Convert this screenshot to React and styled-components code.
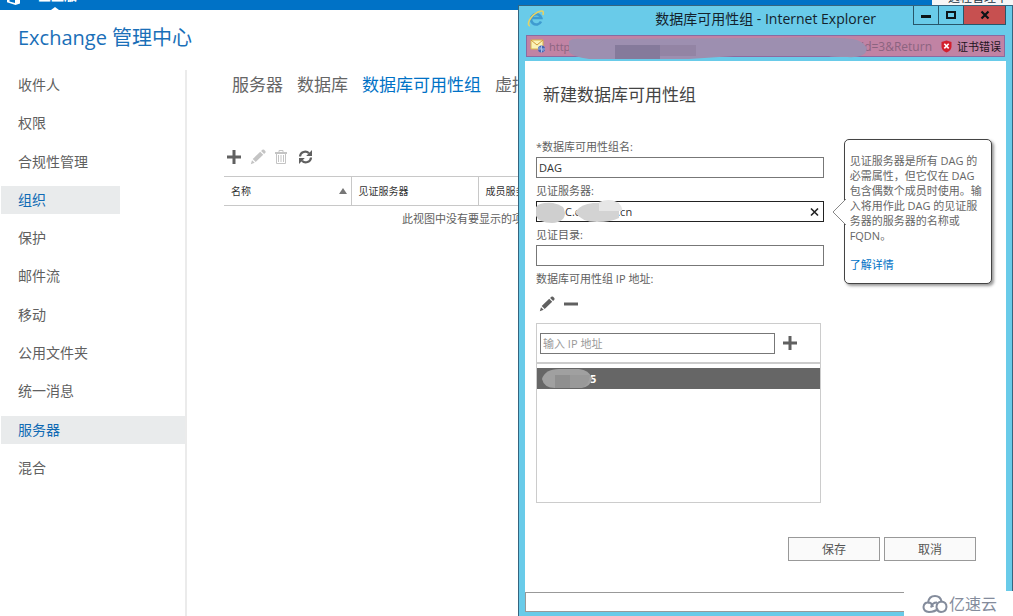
import React from 'react';
import styled, { createGlobalStyle } from 'styled-components';

const Global = createGlobalStyle`
  * { box-sizing: border-box; }
  body {
    margin: 0;
    background: #fff;
    color: #606060;
    font-family: 'Open Sans', 'Noto Sans CJK SC', sans-serif;
    font-size: 11px;
    line-height: 15px;
  }
  button, input { font: inherit; color: inherit; }
  h1, h2, ul { margin: 0; padding: 0; font-weight: 400; list-style: none; }
  a { color: inherit; text-decoration: none; }
`;

const Page = styled.div`
  position: relative;
  display: flex;
  flex-direction: column;
  min-height: 100vh;
  overflow: hidden;
`;

const SuiteBar = styled.header`
  display: flex;
  justify-content: space-between;
  align-items: flex-end;
  height: 10px;
  background: #0072c6;
  color: #fff;
  overflow: hidden;
`;

const SuiteBrand = styled.div`
  position: relative;
  display: flex;
  align-items: flex-end;
  gap: 16px;
  height: 10px;
  padding-left: 6px;
`;

const SuiteName = styled.span`
  font-size: 13px;
  font-weight: 700;
  line-height: 18px;
  padding-bottom: 6px;
`;

const SuiteMarker = styled.i`
  position: absolute;
  left: 51px;
  bottom: 0;
  border: 4px solid transparent;
  border-top: 0;
  border-bottom: 3px solid #fff;
`;

const UserPanel = styled.div`
  align-self: flex-start;
  display: flex;
  align-items: flex-end;
  width: 81px;
  height: 5px;
  padding-left: 16px;
  background: #f6f6f6;
  color: #234;
  font-size: 12px;
  line-height: 14px;
  white-space: nowrap;
  overflow: hidden;
`;

const AppTitle = styled.h1`
  padding: 14px 18px 18px;
  color: #1a6fb8;
  font-size: 20px;
  line-height: 28px;
`;

const Body = styled.div`
  flex: 1;
  display: grid;
  grid-template-columns: 187px minmax(0, 1fr);
`;

const Side = styled.nav`
  padding: 1px 0 0 1px;
  border-right: 2px solid #ebebeb;
`;

const SideList = styled.ul`
  display: flex;
  flex-direction: column;
  justify-content: space-between;
  height: 411px;
`;

const SideLink = styled.a`
  display: block;
  width: ${(p) => (p.$short ? '119px' : 'auto')};
  padding: 0 17px;
  font-size: 14px;
  line-height: 28px;
  color: ${(p) => (p.$active ? '#0f6ab4' : '#606060')};
  background: ${(p) => (p.$active ? '#e9ebec' : 'transparent')};
`;

const Main = styled.main`
  padding: 0 0 0 37px;
  min-width: 0;
`;

const Tabs = styled.nav`
  display: flex;
  gap: 14px;
  padding: 3px 8px 0;
  font-size: 17px;
  line-height: 24px;
  white-space: nowrap;
`;

const Tab = styled.a`
  color: ${(p) => (p.$active ? '#0072c6' : '#666')};
`;

const Toolbar = styled.div`
  display: flex;
  align-items: center;
  gap: 8px;
  padding: ${(p) => p.$pad};
`;

const IconButton = styled.button`
  display: block;
  width: 16px;
  height: 16px;
  padding: 0;
  border: 0;
  background: none;
  color: ${(p) => (p.disabled ? '#c4c4c4' : '#606060')};
  svg { display: block; }
`;

const Grid = styled.table`
  width: 100%;
  table-layout: fixed;
  border-collapse: collapse;
  border-top: 1px solid #c8c8c8;
`;

const HeadCell = styled.th`
  width: ${(p) => p.$width || 'auto'};
  height: 29px;
  padding: 0 7px;
  border-bottom: 1px solid #c8c8c8;
  border-right: 1px solid #c8c8c8;
  color: #333;
  font-size: 10px;
  font-weight: 400;
  text-align: left;
`;

const HeadLabel = styled.span`
  display: flex;
  justify-content: space-between;
  align-items: center;
  margin-right: -3px;
`;

const EmptyCell = styled.td`
  padding: 5px 0 0 178px;
  white-space: nowrap;
`;

const Window = styled.section`
  position: absolute;
  top: 5px;
  right: 0;
  bottom: 0;
  width: 495px;
  display: flex;
  flex-direction: column;
  padding: 0 6px 4px;
  border: 1px solid #35657f;
  border-bottom: 0;
  background: #69cbe9;
`;

const TitleBar = styled.div`
  display: flex;
  align-items: flex-start;
  height: 29px;
  padding-left: 2px;
`;

const WindowTitle = styled.h2`
  flex: 1;
  padding: 3px 37px 0 0;
  color: #14222c;
  font-size: 14px;
  line-height: 20px;
  text-align: right;
  white-space: nowrap;
`;

const Caption = styled.div`
  display: flex;
`;

const CaptionButton = styled.button`
  display: flex;
  align-items: center;
  justify-content: center;
  width: ${(p) => (p.$close ? '43px' : '26px')};
  height: 19px;
  padding: 0;
  border: 1px solid #27566a;
  border-top: 0;
  margin-left: ${(p) => (p.$first ? '0' : '-1px')};
  background: ${(p) => (p.$close ? '#c75050' : 'transparent')};
  color: #0c1418;
`;

const AddressBar = styled.div`
  position: relative;
  display: flex;
  align-items: center;
  height: 22px;
  margin: 0 1px 4px;
  padding: 0 3px;
  border: 1px solid #8b6aa0;
  background: #c183a4;
  color: #8b6480;
`;

const UrlStart = styled.span`
  flex: 1;
  padding-left: 3px;
  font-size: 11px;
`;

const UrlEnd = styled.span`
  font-size: 12px;
`;

const CertError = styled.button`
  display: flex;
  align-items: center;
  gap: 5px;
  margin-left: 9px;
  padding: 0;
  border: 0;
  background: none;
  color: #1c1420;
`;

const UrlMask = styled.svg`
  position: absolute;
  left: 42px;
  top: 0;
`;

const Content = styled.div`
  flex: 1;
  padding: 22px 14px 0 11px;
  background: #fff;
`;

const FormTitle = styled.h2`
  padding: 0 7px 32px;
  color: #444;
  font-size: 17px;
  line-height: 24px;
`;

const FormRow = styled.div`
  display: flex;
  align-items: flex-start;
  gap: 20px;
`;

const Form = styled.form`
  width: 289px;
`;

const Field = styled.div`
  margin-bottom: 5px;
`;

const Label = styled.label`
  display: block;
  padding-bottom: 3px;
  white-space: nowrap;
`;

const InputBox = styled.div`
  position: relative;
  display: flex;
  align-items: center;
  width: ${(p) => p.$width || '100%'};
  height: 21px;
  border: 1px solid ${(p) => (p.$active ? '#222' : '#777')};
  background: #fff;
`;

const Input = styled.input`
  flex: 1;
  min-width: 0;
  height: 19px;
  padding: 0 2px;
  border: 0;
  outline: 0;
  background: transparent;
  color: #333;
  text-indent: ${(p) => p.$indent || '0'};
  &::placeholder { color: #999; opacity: 1; }
`;

const Mask = styled.svg`
  position: absolute;
  left: ${(p) => p.$left};
  top: ${(p) => p.$top};
`;

const ListBox = styled.div`
  width: 285px;
  height: 180px;
  border: 1px solid #ccc;
`;

const AddRow = styled.div`
  display: flex;
  align-items: center;
  gap: 7px;
  height: 40px;
  padding-left: 3px;
  border-bottom: 2px solid #ccc;
`;

const ListItem = styled.div`
  position: relative;
  height: 21px;
  margin-top: 4px;
  padding-left: 53px;
  background: #666;
  color: #fff;
  font-weight: 700;
  line-height: 21px;
`;

const Callout = styled.aside`
  position: relative;
  width: 149px;
  padding: 13px 5px 11px;
  border: 1px solid #444;
  border-radius: 5px;
  background: #fff;
  box-shadow: 2px 2px 3px #999;
  color: #666;
`;

const CalloutTail = styled.svg`
  position: absolute;
  left: -13px;
  top: 58px;
`;

const CalloutLink = styled.a`
  display: block;
  margin-top: 14px;
  color: #0072c6;
`;

const Actions = styled.div`
  display: flex;
  justify-content: flex-end;
  gap: 4px;
  padding: 34px 16px 0 0;
`;

const ActionButton = styled.button`
  width: 92px;
  height: 24px;
  padding: 0;
  border: 1px solid #999;
  background: #fafafa;
  color: #555;
  font-size: 12px;
`;

const StatusBar = styled.div`
  height: 20px;
  border: 1px solid #999;
  background: #fff;
`;

const Watermark = styled.div`
  position: absolute;
  right: 0;
  bottom: 0;
  display: flex;
  align-items: center;
  gap: 1px;
  width: 109px;
  height: 25px;
  padding-left: 18px;
  background: #fff;
  color: #848c9c;
  font-size: 16px;
  line-height: 24px;
`;

const Plus = () => (
  <svg width="16" height="16" viewBox="0 0 16 16" fill="currentColor" aria-hidden="true">
    <path d="M6.500 1h3v5.500H15v3H9.500V15h-3V9.500H1v-3h5.500z" />
  </svg>
);
const Minus = () => (
  <svg width="16" height="16" viewBox="0 0 16 16" fill="currentColor" aria-hidden="true">
    <path d="M1 6.500h14v3H1z" />
  </svg>
);
const Pencil = () => (
  <svg width="16" height="16" viewBox="0 0 16 16" fill="currentColor" aria-hidden="true">
    <path d="M10.200 2.800l3 3L5.700 13l-3-2.900zM11.100 2l1.200-1.200q.9-.7 1.800 0l1.200 1.200q.7.9 0 1.800L14.100 5zM2 11.200l2.700 2.600L.8 15.300z" />
  </svg>
);
const Trash = () => (
  <svg width="16" height="16" viewBox="0 0 16 16" fill="none" stroke="currentColor" aria-hidden="true">
    <path d="M1 4h12" strokeWidth="2" />
    <path d="M5 3V1.500h4V3M2.500 5v9.500h9V5M4.500 6v7M7 6v7M9.500 6v7" />
  </svg>
);
const Refresh = () => (
  <svg width="16" height="16" viewBox="0 0 16 16" aria-hidden="true">
    <path d="M2 7.500A5.200 5.200 0 0 1 11 4.300M13 8.500A5.200 5.200 0 0 1 4 11.700" fill="none" stroke="currentColor" strokeWidth="2.200" />
    <path d="M14 1v6H8.200zM1 15V9h5.800z" fill="currentColor" />
  </svg>
);

const sideItems = ['收件人', '权限', '合规性管理', '组织', '保护', '邮件流', '移动', '公用文件夹', '统一消息', '服务器', '混合'];
const tabItems = ['服务器', '数据库', '数据库可用性组', '虚拟'];

export default function App() {
  return (
    <Page>
      <Global />
      <SuiteBar>
        <SuiteBrand>
          <svg width="16" height="10" viewBox="0 0 16 10" aria-hidden="true">
            <path d="M1 0h2.500v1.500L9 3V0h5v3.500L9.500 5 1 2.200z" fill="#fff" />
          </svg>
          <SuiteName>企业版</SuiteName>
          <SuiteMarker />
        </SuiteBrand>
        <UserPanel>远程管理中</UserPanel>
      </SuiteBar>
      <AppTitle>Exchange 管理中心</AppTitle>
      <Body>
        <Side>
          <SideList>
            {sideItems.map((t) => (
              <li key={t}>
                <SideLink href="#" $active={t === '组织' || t === '服务器'} $short={t === '组织'}>{t}</SideLink>
              </li>
            ))}
          </SideList>
        </Side>
        <Main>
          <Tabs>
            {tabItems.map((t) => (
              <Tab key={t} href="#" $active={t === '数据库可用性组'}>{t}</Tab>
            ))}
          </Tabs>
          <Toolbar $pad="52px 2px 11px">
            <IconButton aria-label="新建"><Plus /></IconButton>
            <IconButton aria-label="编辑" disabled><Pencil /></IconButton>
            <IconButton aria-label="删除" disabled><Trash /></IconButton>
            <IconButton aria-label="刷新"><Refresh /></IconButton>
          </Toolbar>
          <Grid>
            <thead>
              <tr>
                <HeadCell $width="127px">
                  <HeadLabel>
                    名称
                    <svg width="8" height="6" viewBox="0 0 8 6" aria-hidden="true"><path d="M4 0l4 6H0z" fill="#777" /></svg>
                  </HeadLabel>
                </HeadCell>
                <HeadCell $width="127px">见证服务器</HeadCell>
                <HeadCell>成员服务器</HeadCell>
              </tr>
            </thead>
            <tbody>
              <tr><EmptyCell colSpan={3}>此视图中没有要显示的项目。</EmptyCell></tr>
            </tbody>
          </Grid>
        </Main>
      </Body>

      <Window>
        <TitleBar>
          <svg width="18" height="26" viewBox="0 0 18 26" aria-hidden="true">
            <path d="M14 15.500A5.200 5.200 0 1 1 14.300 12H5.500" fill="none" stroke="#3f9bd0" strokeWidth="2.600" />
            <path d="M3 20C-1 19 3 10 11 6c5-2 6-1 5 3" fill="none" stroke="#e4d267" strokeWidth="1.600" />
          </svg>
          <WindowTitle>数据库可用性组 - Internet Explorer</WindowTitle>
          <Caption>
            <CaptionButton $first aria-label="最小化">
              <svg width="10" height="10" viewBox="0 0 10 10"><path d="M0 5h10v3H0z" fill="currentColor" /></svg>
            </CaptionButton>
            <CaptionButton aria-label="最大化">
              <svg width="10" height="10" viewBox="0 0 10 10"><path d="M1 2h8v6H1z" fill="none" stroke="currentColor" strokeWidth="2" /></svg>
            </CaptionButton>
            <CaptionButton $close aria-label="关闭">
              <svg width="10" height="10" viewBox="0 0 10 10"><path d="M1.500 1.500l7 7M8.500 1.500l-7 7" stroke="currentColor" strokeWidth="2.200" /></svg>
            </CaptionButton>
          </Caption>
        </TitleBar>
        <AddressBar>
          <svg width="16" height="16" viewBox="0 0 16 16" aria-hidden="true">
            <path d="M1 2h12v9H1z" fill="#fbf3b8" stroke="#d9b64a" />
            <path d="M1 2l6 5 6-5" fill="none" stroke="#d29a3a" />
            <circle cx="11.500" cy="11" r="3.500" fill="#4465b4" />
            <path d="M11.500 7.500v7M8 11h7M9 8.500l5 5" stroke="#a9bde8" />
          </svg>
          <UrlStart>http</UrlStart>
          <UrlEnd>id=3&amp;Return</UrlEnd>
          <CertError>
            <svg width="11" height="13" viewBox="0 0 11 13" aria-hidden="true">
              <path d="M5.500.5L10.500 2v5q-.5 3.500-5 5.500Q1 10.500.5 7V2z" fill="#d3202e" />
              <path d="M3.300 3.800l4.400 4.600M7.700 3.800L3.300 8.400" stroke="#fff" strokeWidth="1.600" />
            </svg>
            证书错误
          </CertError>
          <UrlMask width="300" height="24" viewBox="0 0 300 24" aria-hidden="true">
            <path d="M0 5Q4 2 12 3L200 2Q270 0 288 4 300 9 297 16 294 22 278 21 263 21 260 20H165L120 23H20Q4 21 0 16z" fill="#9d8fb0" />
            <path d="M46 9h45v14H46z" fill="#857a9b" />
            <path d="M91 9h36v11H91z" fill="#9384a4" />
          </UrlMask>
        </AddressBar>
        <Content>
          <FormTitle>新建数据库可用性组</FormTitle>
          <FormRow>
            <Form>
              <Field>
                <Label htmlFor="dag-name">*数据库可用性组名:</Label>
                <InputBox><Input id="dag-name" defaultValue="DAG" /></InputBox>
              </Field>
              <Field>
                <Label htmlFor="witness">见证服务器:</Label>
                <InputBox $active>
                  <Input id="witness" $indent="26px" defaultValue={'C.c' + '\u00a0'.repeat(13) + '.cn'} />
                  <IconButton type="button" aria-label="清除">
                    <svg width="16" height="16" viewBox="0 0 16 16"><path d="M4 4.500l7 7M11 4.500l-7 7" stroke="#222" strokeWidth="1.600" /></svg>
                  </IconButton>
                  <Mask $left="-2px" $top="-4px" width="90" height="26" viewBox="0 0 90 26" aria-hidden="true">
                    <path d="M1 9Q5 4 18 5 30 7 30 15 30 24 17 25 4 25 1 18z" fill="#cfcfcf" />
                    <path d="M40 14Q46 6 58 5H84V20Q76 24 62 24 46 24 40 14z" fill="#d3d3d3" />
                    <path d="M64 4Q74 0 82 4 88 8 87 13H64z" fill="#e6e6e6" />
                  </Mask>
                </InputBox>
              </Field>
              <Field>
                <Label htmlFor="witness-dir">见证目录:</Label>
                <InputBox><Input id="witness-dir" /></InputBox>
              </Field>
              <Label htmlFor="dag-ip">数据库可用性组 IP 地址:</Label>
              <Toolbar $pad="7px 3px 11px">
                <IconButton type="button" aria-label="编辑"><Pencil /></IconButton>
                <IconButton type="button" aria-label="移除"><Minus /></IconButton>
              </Toolbar>
              <ListBox>
                <AddRow>
                  <InputBox $width="235px"><Input id="dag-ip" placeholder="输入 IP 地址" /></InputBox>
                  <IconButton type="button" aria-label="添加"><Plus /></IconButton>
                </AddRow>
                <ListItem>
                  5
                  <Mask $left="4px" $top="0" width="52" height="21" viewBox="0 0 52 21" aria-hidden="true">
                    <path d="M1 11Q4 1 18 1H38Q48 2 51 10 50 19 40 20H14Q3 20 1 11z" fill="#a0a0a0" />
                    <path d="M14 7h15v13H14z" fill="#8f8f8f" />
                    <path d="M29 7h20q-1 12-10 13H29z" fill="#999" />
                  </Mask>
                </ListItem>
              </ListBox>
            </Form>
            <Callout>
              <CalloutTail width="14" height="28" viewBox="0 0 14 28" aria-hidden="true">
                <path d="M14 1L1 14l13 13" fill="#fff" stroke="#888" />
              </CalloutTail>
              见证服务器是所有 DAG 的必需属性，但它仅在 DAG 包含偶数个成员时使用。输入将用作此 DAG 的见证服务器的服务器的名称或 FQDN。
              <CalloutLink href="#">了解详情</CalloutLink>
            </Callout>
          </FormRow>
          <Actions>
            <ActionButton>保存</ActionButton>
            <ActionButton>取消</ActionButton>
          </Actions>
        </Content>
        <StatusBar />
      </Window>

      <Watermark>
        <svg width="26" height="20" viewBox="0 0 26 20" fill="none" stroke="#848c9c" strokeWidth="2" aria-hidden="true">
          <path d="M16 14.500Q13 18 7 18 1.500 17.500 1.500 13 2 8.500 6 8.500 7 2 13 2 18.500 2 19.500 7.500" />
          <path d="M6 8.500q4 0 5 4.500M14.500 13q0-5 5-5.500 5 .5 5 5.500-.5 5-5.500 5-4.500-.5-4.500-5z" />
          <path d="M9 13.500q1-5 6-5" />
        </svg>
        亿速云
      </Watermark>
    </Page>
  );
}
